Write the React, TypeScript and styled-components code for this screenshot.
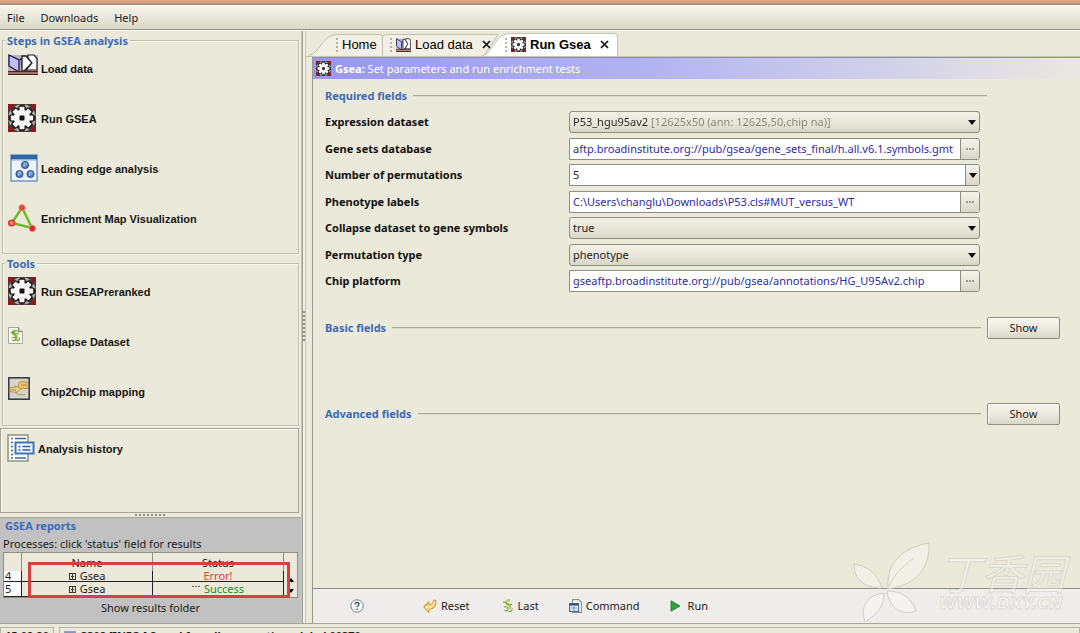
import React, { useState } from "react";
import styled, { createGlobalStyle, css } from "styled-components";

const ui = `"Noto Sans", "Noto Sans CJK SC", sans-serif`;
const arial = `"Liberation Sans", Arial, sans-serif`;
const face = "#ebe9da";
const blue = "#3b6bb8";

const GlobalStyle = createGlobalStyle`
  *, *::before, *::after { box-sizing: border-box; }
  body { margin: 0; background: ${face}; overflow: hidden; }
  button, input, select { font: inherit; color: inherit; margin: 0; }
`;

const Window = styled.div`
  position: relative;
  display: flex;
  flex-direction: column;
  height: 100vh;
  overflow: hidden;
  background: ${face};
  color: #1c1c1a;
  font: 11px/16px ${ui};
`;

const TitleStrip = styled.div`
  flex: none;
  height: 6px;
  background: linear-gradient(#dfa287 0 3px, #c08f7c 3px 4px, #98907f 4px 5px, #fbfaf4 5px);
`;

const MenuBar = styled.nav`
  flex: none;
  display: flex;
  gap: 16px;
  height: 25px;
  padding: 4px 7px 5px;
  background: linear-gradient(#f6f4ea, #d9d9c9 23px, #96978c 23px 24px, #fdfdf8 24px);
`;

const MenuButton = styled.button`
  border: 0;
  padding: 0;
  background: none;
  line-height: 16px;
`;

const Split = styled.div`
  flex: 1;
  min-height: 0;
  display: flex;
`;

const Sidebar = styled.aside`
  flex: none;
  width: 302px;
  display: flex;
  flex-direction: column;
  border-right: 1px solid #c9c8b8;
`;

const Group = styled.section<{ $height: number }>`
  position: relative;
  height: ${(p) => p.$height}px;
  margin: 9px 2px 0 2px;
  border: 1px solid #bfc0ae;
  box-shadow: inset 1px 1px #f6f5ec, 1px 1px #f6f5ec;
  padding: 13px 5px 0;
`;

const GroupTitle = styled.h2`
  position: absolute;
  top: -8px;
  left: 2px;
  margin: 0;
  padding: 0 2px;
  background: ${face};
  color: ${blue};
  font-size: 11px;
  line-height: 16px;
`;

const Launch = styled.button<{ $gap?: number }>`
  display: grid;
  grid-template-columns: ${(p) => p.$gap ?? 33}px 1fr;
  width: 100%;
  height: 50px;
  border: 0;
  padding: 0;
  background: none;
  text-align: left;
  color: #161614;
  font: bold 11px/30px ${arial};
  align-items: start;

  svg { display: block; }
`;

const History = styled.section`
  flex: 1;
  min-height: 60px;
  margin: 2px 2px 0 0;
  padding: 5px 6px;
  border: 1px solid #a5a698;
  box-shadow: inset 1px 1px #fbfaf2;
`;

const HorizontalGrip = styled.div`
  flex: none;
  height: 5px;
  display: flex;
  justify-content: center;
  align-items: center;
  border-bottom: 1px solid #a6a69c;

  &::before {
    content: "";
    width: 32px;
    height: 2px;
    background: repeating-linear-gradient(90deg, #8f9084 0 2px, transparent 2px 4px);
  }
`;

const VerticalGrip = styled.div`
  flex: none;
  width: 4px;
  display: flex;
  align-items: center;
  border-left: 1px solid #9b9c90;
  border-right: 1px solid #c4c4b4;
  background: #f4f3e8;

  &::before {
    content: "";
    width: 2px;
    height: 32px;
    background: repeating-linear-gradient(#8f9084 0 2px, transparent 2px 4px);
  }
`;

const Reports = styled.section`
  flex: none;
  position: relative;
  height: 105px;
  background: #c1c1c1;
`;

const ReportsTitle = styled.h2`
  margin: 0;
  padding-left: 5px;
  color: ${blue};
  font-size: 11px;
  line-height: 16px;
`;

const ReportsHint = styled.p`
  margin: 0;
  padding: 1px 3px 0;
  line-height: 17px;
`;

const TableBox = styled.div`
  display: flex;
  width: 295px;
  height: 46px;
  margin-left: 3px;
  border: 1px solid #8e8e84;
  background: ${face};
`;

const ProcessTable = styled.table`
  width: 280px;
  height: 44px;
  table-layout: fixed;
  border-collapse: separate;
  border-spacing: 0;

  th, td { padding: 0; text-align: center; font-weight: normal; }
  th { height: 18px; line-height: 17px; border-right: 1px solid #8e8e84; }
  th:first-child, td:first-child { width: 18px; }
  td { border-right: 1px solid #222; border-bottom: 1px solid #222; }
  td:first-child { background: #fff; text-align: left; padding-left: 1px; }
  tr:first-child td { height: 11px; line-height: 10px; }
  tr:last-child td { height: 15px; line-height: 14px; }
`;

const CellText = styled.div<{ $color?: string }>`
  display: flex;
  align-items: center;
  justify-content: center;
  gap: 4px;
  color: ${(p) => p.$color ?? "inherit"};
`;

const ScrollArrows = styled.div`
  flex: 1;
  display: flex;
  flex-direction: column;
  justify-content: flex-end;
  align-items: center;
  gap: 7px;
  padding-bottom: 4px;
`;

const Highlight = styled.div`
  position: absolute;
  top: 44px;
  left: 28px;
  width: 262px;
  height: 36px;
  border: 3px solid #d8403f;
`;

const FolderButton = styled.button`
  display: block;
  width: 100%;
  border: 0;
  padding: 0;
  background: none;
  line-height: 20px;
`;

const Workspace = styled.main`
  flex: 1;
  min-width: 0;
  display: flex;
  flex-direction: column;
`;

const TabRow = styled.div`
  flex: none;
  position: relative;
  display: flex;
  align-items: flex-end;
  height: 25px;
  padding-left: 6px;
  font: 13px/20px ${arial};
  color: #000;
`;

const TabShape = styled.svg`
  position: absolute;
  left: 0;
  bottom: 0;
`;

const Tab = styled.button<{ $width: number; $pad: number; $active?: boolean }>`
  position: relative;
  display: flex;
  align-items: center;
  gap: 4px;
  width: ${(p) => p.$width}px;
  height: 23px;
  padding: 0 0 0 ${(p) => p.$pad}px;
  border: 0;
  background: none;
  font-weight: ${(p) => (p.$active ? "bold" : "normal")};
  white-space: nowrap;

  svg { flex: none; }
`;

const TabGrip = styled.span`
  width: 2px;
  height: 14px;
  background: repeating-linear-gradient(#b3b3a8 0 2px, transparent 2px 4px);
`;

const TabClose = styled.span`
  margin-left: 5px;
  display: flex;
`;

const Frame = styled.div`
  flex: 1;
  min-height: 0;
  display: flex;
  flex-direction: column;
  padding-left: 6px;
  border-top: 1px solid #c4c4b4;
`;

const Panel = styled.div`
  flex: 1;
  min-height: 0;
  display: flex;
  flex-direction: column;
  border-left: 1px solid #96978c;
`;

const PanelHeader = styled.h1`
  flex: none;
  display: flex;
  align-items: center;
  gap: 4px;
  height: 22px;
  margin: 0;
  padding: 0 4px 0 3px;
  border-top: 1px solid #8f8fb0;
  background: linear-gradient(90deg, #9896f0, #b5b4f1 45%, #ebe9e0);
  color: #fff;
  font-size: 11px;
  line-height: 16px;
  font-weight: normal;
`;

const Form = styled.form`
  flex: 1;
  min-height: 0;
  padding: 9px 20px 0 12px;
`;

const SectionHead = styled.div<{ $inset?: number }>`
  display: flex;
  align-items: center;
  gap: 6px;
  min-height: 16px;
  margin-right: ${(p) => p.$inset ?? 0}px;

  &::before { content: ""; order: 1; flex: 1; height: 2px; background: #a9aa9c; border-bottom: 1px solid #dcdbcc; }

  & + & { margin-top: 64px; }
`;

const SectionTitle = styled.h2`
  margin: 0;
  color: ${blue};
  font-size: 11px;
  line-height: 16px;
`;

const ShowButton = styled.button`
  order: 2;
  width: 73px;
  height: 22px;
  border: 1px solid #8d8e82;
  border-radius: 2px;
  padding: 0;
  background: linear-gradient(#f8f6ec, #e9e7db 60%, #d6d5c7);
  box-shadow: inset 1px 1px #fbfaf4;
`;

const Fields = styled.div`
  display: flex;
  flex-direction: column;
  justify-content: space-between;
  height: 181px;
  margin: 7px 80px 25px 0;
`;

const Row = styled.div`
  display: grid;
  grid-template-columns: 244px 1fr;
  align-items: center;
  height: 22px;
`;

const Label = styled.label`
  font-weight: bold;
  color: #111;
`;

const Control = styled.div<{ $raised?: boolean }>`
  display: flex;
  position: relative;
  height: 22px;
  border: 1px solid #8d8e82;
  border-radius: ${(p) => (p.$raised ? "3px" : "0 3px 3px 0")};
  background: ${(p) => (p.$raised ? "linear-gradient(#f3f1e6, #e8e6d8 55%, #d6d6c6)" : "#fff")};
`;

const Select = styled.select<{ $split?: boolean }>`
  appearance: none;
  flex: 1;
  min-width: 0;
  border: 0;
  padding: 0 16px 0 3px;
  background: none;
  ${(p) =>
    p.$split &&
    css`
      background: linear-gradient(90deg, #262624 79px, #85857c 79px);
      background-clip: text;
      -webkit-text-fill-color: transparent;
    `}
`;

const Arrow = styled.svg`
  position: absolute;
  right: 3px;
  top: 8px;
  pointer-events: none;
`;

const Input = styled.input<{ $plain?: boolean }>`
  flex: 1;
  min-width: 0;
  border: 0;
  padding: 0 2px 0 3px;
  background: transparent;
  color: ${(p) => (p.$plain ? "#222" : "#2f2aa0")};
`;

const SideButton = styled.button<{ $width: number }>`
  flex: none;
  width: ${(p) => p.$width}px;
  border: 0;
  border-left: 1px solid #8d8e82;
  border-radius: 0 2px 2px 0;
  padding: 0;
  display: flex;
  align-items: center;
  justify-content: center;
  background: linear-gradient(#f6f4ea, #e6e4d7 55%, #d6d6c6);
`;

const Footer = styled.div`
  flex: none;
  display: flex;
  align-items: center;
  height: 35px;
  padding: 0 37px;
  border-top: 1px solid #8f8f88;
  background: #efedec;
`;

const FooterButton = styled.button<{ $lead?: number; $gap?: number }>`
  display: flex;
  align-items: center;
  gap: ${(p) => p.$gap ?? 4}px;
  margin-left: ${(p) => p.$lead ?? 0}px;
  border: 0;
  padding: 0;
  background: none;
`;

const StatusBar = styled.footer`
  flex: none;
  display: flex;
  gap: 5px;
  height: 10px;
  padding-top: 3px;
  border-top: 1px solid #a5a698;
  overflow: hidden;
  font-weight: bold;
  line-height: 14px;
`;

const StatusCell = styled.div<{ $grow?: boolean }>`
  flex: ${(p) => (p.$grow ? "1" : "0 0 53px")};
  display: flex;
  gap: 5px;
  height: 22px;
  padding: 1px 4px;
  border: 1px solid #b4b5a6;
  white-space: nowrap;
`;

const Watermark = styled.div`
  position: absolute;
  right: 15px;
  bottom: 9px;
  display: flex;
  gap: 8px;
  color: rgba(255, 255, 255, 0.35);
  -webkit-text-stroke: 1px rgba(205, 204, 194, 0.6);
  pointer-events: none;
`;

const WatermarkText = styled.div`
  display: flex;
  flex-direction: column;
  padding-top: 8px;
`;

const WatermarkName = styled.span`
  font: italic 42px/44px "Noto Sans CJK SC", sans-serif;
`;

const WatermarkSite = styled.span`
  font: italic bold 16px/20px "DejaVu Sans", sans-serif;
`;

const teeth = [0, 45, 90, 135, 180, 225, 270, 315];

function GearIcon({ size = 28 }: { size?: number }) {
  return (
    <svg width={size} height={size} viewBox="0 0 28 28" aria-hidden="true">
      <rect width="28" height="28" fill="#8b1a1c" />
      <rect x="5" width="18" height="28" fill="#4a3a3a" />
      <rect y="5" width="28" height="18" fill="#4a3a3a" />
      <circle cx="14" cy="14" r="12.5" fill="none" stroke="#b3afaf" strokeWidth="2.6" strokeDasharray="4.6 5.2" strokeDashoffset="-2.6" />
      {teeth.map((a) => (
        <rect key={a} x="10.5" y="1.4" width="7" height="8" rx="1.5" fill="#111" transform={`rotate(${a} 14 14)`} />
      ))}
      <circle cx="14" cy="14" r="9.6" fill="#111" />
      {teeth.map((a) => (
        <rect key={a} x="11.5" y="2.8" width="5" height="6" rx="0.8" fill="#f6f4f4" transform={`rotate(${a} 14 14)`} />
      ))}
      <circle cx="14" cy="14" r="8.2" fill="#f6f4f4" />
      <rect x="11.5" y="11.5" width="5" height="5" rx="1" fill="#111" />
    </svg>
  );
}

function BooksIcon({ width = 30, height = 21 }: { width?: number; height?: number }) {
  return (
    <svg width={width} height={height} viewBox="0 0 30 21" preserveAspectRatio="none" aria-hidden="true">
      <rect y="1" width="30" height="17" fill="#b9b4bd" />
      <path d="M1 1l10 5v12L1 12z" fill="#c3bdf6" stroke="#1c1a38" strokeWidth="1.3" />
      <path d="M11 6l4-2v13" fill="#8f88c8" stroke="#1c1a38" strokeWidth="1.3" />
      <path d="M14 2h4l6 7-8 8h-2z" fill="#fff" stroke="#1b1b20" strokeWidth="1.3" />
      <path d="M20 1h6l3 4v11H18l6-7-4-5z" fill="#fdfdfd" stroke="#1b1b20" strokeWidth="1.2" />
      <rect y="17" width="30" height="4" fill="#4a2626" />
      <rect y="18.4" width="30" height="1.2" fill="#d9a58c" />
    </svg>
  );
}

function LeadingEdgeIcon() {
  return (
    <svg width="30" height="28" viewBox="0 0 30 28" aria-hidden="true">
      <rect x="3" y="1" width="26" height="26" fill="#eef4fb" stroke="#6a8fb9" strokeWidth="1.4" />
      <rect x="3" y="1" width="26" height="4.6" fill="#2e67a6" />
      <rect x="4" y="5.4" width="24" height="1.4" fill="#a9c6e4" />
      {[[17, 11], [11.5, 20], [22.5, 20]].map(([x, y]) => (
        <g key={x}>
          <circle cx={x} cy={y} r="3.6" fill="#4a7cba" stroke="#2b5590" strokeWidth="1" />
          <path d={`M${x - 1} ${y + 2}v-4h1.6a1 1 0 0 1 0 2.2h-1.6`} fill="none" stroke="#c2d6ee" strokeWidth="0.8" />
        </g>
      ))}
    </svg>
  );
}

function NetworkIcon() {
  return (
    <svg width="28" height="28" viewBox="0 0 28 28" aria-hidden="true">
      <path d="M14 3.5L4 19l20 5z" fill="none" stroke="#66bd24" strokeWidth="2.4" />
      <circle cx="14" cy="3.8" r="3.2" fill="#e0463a" stroke="#f09a8a" strokeWidth="0.8" />
      <circle cx="3.6" cy="19" r="2.8" fill="#f08a70" stroke="#dc2f26" strokeWidth="1.6" />
      <circle cx="24.4" cy="24.4" r="3.2" fill="#d92b27" stroke="#f09a8a" strokeWidth="0.8" />
    </svg>
  );
}

function ScrollDocIcon() {
  return (
    <svg width="15" height="17" viewBox="0 0 15 17" aria-hidden="true">
      <path d="M.5.5h10l4 4v12H.5z" fill="#fbfbf4" stroke="#a6a89a" />
      <path d="M10.5.5v4h4" fill="#ddd" stroke="#7d8076" />
      <path d="M9.5 4C5 2.5 3.5 6 6 7.5s4 3 2 5" fill="none" stroke="#9aba4c" strokeWidth="2.2" />
      <path d="M3 6c1.5-1.5 3-.5 4 .5s3 .5 4-1M4 11c2-1.5 4-.5 4 1s-2 2-3.5 1M8.5 13.5c2 .5 3.5-1 3-3" fill="none" stroke="#6f9335" strokeWidth="1.2" />
    </svg>
  );
}

function ChipIcon() {
  return (
    <svg width="22" height="23" viewBox="0 0 22 23" aria-hidden="true">
      <rect x="0.8" y="0.8" width="20.4" height="21.4" fill="#d6d3cb" stroke="#33353f" strokeWidth="1.5" />
      <path d="M11 5.5l2-1 7 .5v6.5h-6l-2 1.5-2-2z" fill="#e9c070" stroke="#b08a45" strokeWidth="0.8" />
      <path d="M2 10.5h5V8.5l6 3.5-3 3H4l-2-1z" fill="#f0cf85" stroke="#b08a45" strokeWidth="0.8" />
      <path d="M7 15c3 3 6 3 10 2.5M13 8h6M3 13h5" fill="none" stroke="#b5883e" strokeWidth="1" />
    </svg>
  );
}

function HistoryIcon() {
  return (
    <svg width="28" height="28" viewBox="0 0 28 28" aria-hidden="true">
      <rect x="1" y="1" width="20" height="26" fill="#fdfdf8" stroke="#9fa28c" strokeWidth="1.8" />
      <path d="M4 4.5h2M8 4.5h11M4 8.5h2M4 12.5h2M4 16.5h2M4 20.5h2M4 24h2M8 24h11" stroke="#3b68ab" strokeWidth="1.5" />
      <rect x="8.5" y="8.5" width="18" height="11" fill="#f2f7fd" stroke="#3d73b8" strokeWidth="2" />
      <path d="M11.5 12.5h2M15.5 12.5h8M11.5 16h2M15.5 16h8" stroke="#2f5d9f" strokeWidth="1.5" />
    </svg>
  );
}

const CloseIcon = () => (
  <svg width="9" height="9" viewBox="0 0 9 9" aria-hidden="true">
    <path d="M1 1l7 7M8 1L1 8" stroke="#111" strokeWidth="1.7" />
  </svg>
);

const Down = () => <path d="M0 0h8L4 5z" fill="#0c0c0a" />;

const NodeIcon = () => (
  <svg width="7" height="7" viewBox="0 0 7 7" aria-hidden="true">
    <rect x="0.5" y="0.5" width="6" height="6" fill="#e6e4cf" stroke="#3a3a2e" />
    <path d="M3.5 1v5M2 3.5h3" stroke="#3a3a2e" />
  </svg>
);

const DotsIcon = () => (
  <svg width="8" height="8" viewBox="0 0 8 8" aria-hidden="true">
    <path d="M0 1.5h2M3 1.5h2M6 1.5h2" stroke="#66665c" strokeWidth="1" />
  </svg>
);

const HelpIcon = () => (
  <svg width="14" height="14" viewBox="0 0 14 14" aria-hidden="true">
    <circle cx="7" cy="7" r="6.2" fill="#f7f9fa" stroke="#6b8090" strokeWidth="1" />
    <path d="M5 5.4c0-2.6 4-2.4 4-.2 0 1.5-2 1.5-2 3M7 9.6v1.4" fill="none" stroke="#3b5266" strokeWidth="1.3" />
  </svg>
);

const ResetIcon = () => (
  <svg width="14" height="14" viewBox="0 0 14 14" aria-hidden="true">
    <path d="M.8 8l5-5v3c3 0 4.5-1.5 5-5l2 .5c.5 5-1.5 8.5-7 9v3z" fill="#fbe3a0" stroke="#d39a2c" strokeWidth="1.1" strokeLinejoin="round" />
  </svg>
);

const LastIcon = () => (
  <svg width="12" height="14" viewBox="0 0 12 14" aria-hidden="true">
    <path d="M8 1.2C4.5.8 4 3.5 6 5s3 3 1.5 5" fill="none" stroke="#b4cc66" strokeWidth="2.2" />
    <path d="M1 3.5c1-1 3-.5 3.5 1s3 2 5.5.5M2 8c2-.8 4 0 4 2s-2 2.5-3.5 1.5M6.5 12.5c2.5.5 4-1 3.5-3" fill="none" stroke="#8aa53a" strokeWidth="1.2" />
  </svg>
);

const CommandIcon = () => (
  <svg width="13" height="14" viewBox="0 0 13 14" aria-hidden="true">
    <path d="M3.5.6h6l3 3v9.8h-9z" fill="#fbfaf2" stroke="#87908c" strokeWidth="1.1" />
    <rect x="0.6" y="4.6" width="9" height="7.8" fill="#e9f1fa" stroke="#44678f" strokeWidth="1.1" />
    <path d="M.6 5.6h9" stroke="#2c5488" strokeWidth="2" />
    <path d="M2 9h6M5 7v5" stroke="#7793b5" strokeWidth="1" />
  </svg>
);

const StatusIcon = () => (
  <svg width="12" height="12" viewBox="0 0 12 12" aria-hidden="true">
    <rect x="0.5" y="2.5" width="11" height="9" fill="#d5dcea" stroke="#9aa6c0" />
    <path d="M.5 3.5h11" stroke="#8795b8" strokeWidth="2" />
  </svg>
);

const RunIcon = () => (
  <svg width="11" height="12" viewBox="0 0 11 12" aria-hidden="true">
    <path d="M1 .8l9 5.2-9 5.2z" fill="#2fa33c" stroke="#1f7d2b" strokeWidth="0.9" />
  </svg>
);

const LeafMark = () => (
  <svg width="78" height="82" viewBox="0 0 78 82" fill="rgba(255,255,255,.32)" stroke="#cfcec0" strokeWidth="1" aria-hidden="true">
    <path d="M35 47C33 22 48 6 76 1c1 24-12 42-41 46z" />
    <path d="M36 44c6-12 14-20 25-28" />
    <path d="M29 46C11 46 1 37 1 22c14 2 24 10 28 24z" />
    <path d="M34 49c14 0 24 6 29 20-14 5-27-3-29-20z" />
    <path d="M31 51c0 14-7 21-19 29-5-16 2-27 19-29z" />
  </svg>
);

type FieldProps = { id: string; label: string; value: string };

function BrowseField({ id, label, value }: FieldProps) {
  const [text, setText] = useState(value);
  return (
    <Row>
      <Label htmlFor={id}>{label}</Label>
      <Control>
        <Input id={id} value={text} onChange={(e) => setText(e.target.value)} />
        <SideButton type="button" $width={19} aria-label={`Browse ${label}`}>
          <svg width="8" height="2" viewBox="0 0 8 2" aria-hidden="true">
            <path d="M0 1h2M3 1h2M6 1h2" stroke="#55554c" strokeWidth="1" />
          </svg>
        </SideButton>
      </Control>
    </Row>
  );
}

function SelectField({ id, label, value, others = [], split }: FieldProps & { others?: string[]; split?: boolean }) {
  return (
    <Row>
      <Label htmlFor={id}>{label}</Label>
      <Control $raised>
        <Select id={id} defaultValue={value} $split={split}>
          {[value, ...others].map((o) => (
            <option key={o}>{o}</option>
          ))}
        </Select>
        <Arrow width="8" height="5" aria-hidden="true"><Down /></Arrow>
      </Control>
    </Row>
  );
}

export default function App() {
  const [count, setCount] = useState("5");
  return (
    <Window>
      <GlobalStyle />
      <TitleStrip />
      <MenuBar>
        <MenuButton>File</MenuButton>
        <MenuButton>Downloads</MenuButton>
        <MenuButton>Help</MenuButton>
      </MenuBar>
      <Split>
        <Sidebar>
          <Group $height={214}>
            <GroupTitle>Steps in GSEA analysis</GroupTitle>
            <Launch><BooksIcon />Load data</Launch>
            <Launch><GearIcon />Run GSEA</Launch>
            <Launch><LeadingEdgeIcon />Leading edge analysis</Launch>
            <Launch><NetworkIcon />Enrichment Map Visualization</Launch>
          </Group>
          <Group $height={163}>
            <GroupTitle>Tools</GroupTitle>
            <Launch><GearIcon />Run GSEAPreranked</Launch>
            <Launch><ScrollDocIcon />Collapse Dataset</Launch>
            <Launch><ChipIcon />Chip2Chip mapping</Launch>
          </Group>
          <History>
            <Launch $gap={31}><HistoryIcon />Analysis history</Launch>
          </History>
          <HorizontalGrip />
          <Reports>
            <ReportsTitle>GSEA reports</ReportsTitle>
            <ReportsHint>Processes: click 'status' field for results</ReportsHint>
            <TableBox>
              <ProcessTable>
                <thead>
                  <tr>
                    <th />
                    <th>Name</th>
                    <th>Status</th>
                  </tr>
                </thead>
                <tbody>
                  <tr>
                    <td>4</td>
                    <td><CellText><NodeIcon />Gsea</CellText></td>
                    <td><CellText $color="#e8392f">Error!</CellText></td>
                  </tr>
                  <tr>
                    <td>5</td>
                    <td><CellText><NodeIcon />Gsea</CellText></td>
                    <td><CellText $color="#1d8a24"><DotsIcon />Success</CellText></td>
                  </tr>
                </tbody>
              </ProcessTable>
              <ScrollArrows>
                <svg width="6" height="4" viewBox="0 0 6 4" aria-hidden="true"><path d="M0 4h6L3 0z" /></svg>
                <svg width="6" height="4" viewBox="0 0 6 4" aria-hidden="true"><path d="M0 0h6L3 4z" /></svg>
              </ScrollArrows>
            </TableBox>
            <FolderButton>Show results folder</FolderButton>
            <Highlight />
          </Reports>
        </Sidebar>
        <VerticalGrip />
        <Workspace>
          <TabRow>
            <TabShape width="313" height="23" viewBox="0 0 313 23" aria-hidden="true">
              <path d="M3 22.5C14 20 16 1.5 32 1.5H73.5Q76.5 1.5 76.5 4.5V22.5" fill="#f2f0e5" stroke="#c2c2b4" />
              <path d="M76.5 22.5V4.5Q77 1.5 80 1.5H192L178 22.5" fill="#f2f0e5" stroke="#c2c2b4" />
              <path d="M176 23C188 20 188 .5 204 .5H308Q311.5.5 311.5 3.5V23" fill="#fff" stroke="#c2c2b4" />
            </TabShape>
            <Tab $width={71} $pad={24}><TabGrip />Home</Tab>
            <Tab $width={115} $pad={7}>
              <TabGrip /><BooksIcon width={15} height={14} />Load data
              <TabClose><CloseIcon /></TabClose>
            </Tab>
            <Tab $width={118} $pad={7} $active>
              <TabGrip /><GearIcon size={15} />Run Gsea
              <TabClose><CloseIcon /></TabClose>
            </Tab>
          </TabRow>
          <Frame>
            <Panel>
              <PanelHeader>
                <GearIcon size={15} />
                <span><b>Gsea:</b> Set parameters and run enrichment tests</span>
              </PanelHeader>
              <Form onSubmit={(e) => e.preventDefault()}>
                <SectionHead $inset={73}><SectionTitle>Required fields</SectionTitle></SectionHead>
                <Fields>
                  <SelectField id="dataset" label="Expression dataset" value="P53_hgu95av2 [12625x50 (ann: 12625,50,chip na)]" split />
                  <BrowseField id="sets" label="Gene sets database" value="aftp.broadinstitute.org://pub/gsea/gene_sets_final/h.all.v6.1.symbols.gmt" />
                  <Row>
                    <Label htmlFor="count">Number of permutations</Label>
                    <Control>
                      <Input id="count" $plain value={count} onChange={(e) => setCount(e.target.value)} />
                      <SideButton type="button" $width={14} aria-label="Choose number of permutations">
                        <svg width="8" height="5" aria-hidden="true"><Down /></svg>
                      </SideButton>
                    </Control>
                  </Row>
                  <BrowseField id="labels" label="Phenotype labels" value="C:\Users\changlu\Downloads\P53.cls#MUT_versus_WT" />
                  <SelectField id="collapse" label="Collapse dataset to gene symbols" value="true" others={["false"]} />
                  <SelectField id="type" label="Permutation type" value="phenotype" others={["gene_set"]} />
                  <BrowseField id="chip" label="Chip platform" value="gseaftp.broadinstitute.org://pub/gsea/annotations/HG_U95Av2.chip" />
                </Fields>
                <SectionHead>
                  <SectionTitle>Basic fields</SectionTitle>
                  <ShowButton type="button">Show</ShowButton>
                </SectionHead>
                <SectionHead>
                  <SectionTitle>Advanced fields</SectionTitle>
                  <ShowButton type="button">Show</ShowButton>
                </SectionHead>
              </Form>
              <Footer>
                <FooterButton aria-label="Help"><HelpIcon /></FooterButton>
                <FooterButton $lead={59}><ResetIcon />Reset</FooterButton>
                <FooterButton $lead={32}><LastIcon />Last</FooterButton>
                <FooterButton $lead={30}><CommandIcon />Command</FooterButton>
                <FooterButton $lead={30} $gap={7}><RunIcon />Run</FooterButton>
              </Footer>
            </Panel>
          </Frame>
        </Workspace>
      </Split>
      <StatusBar>
        <StatusCell>15:09:20</StatusCell>
        <StatusCell $grow><StatusIcon />3308 [INFO ] Saved for vdb connections, label 00370</StatusCell>
      </StatusBar>
      <Watermark>
        <LeafMark />
        <WatermarkText>
          <WatermarkName>丁香园</WatermarkName>
          <WatermarkSite>WWW.DXY.CN</WatermarkSite>
        </WatermarkText>
      </Watermark>
    </Window>
  );
}
